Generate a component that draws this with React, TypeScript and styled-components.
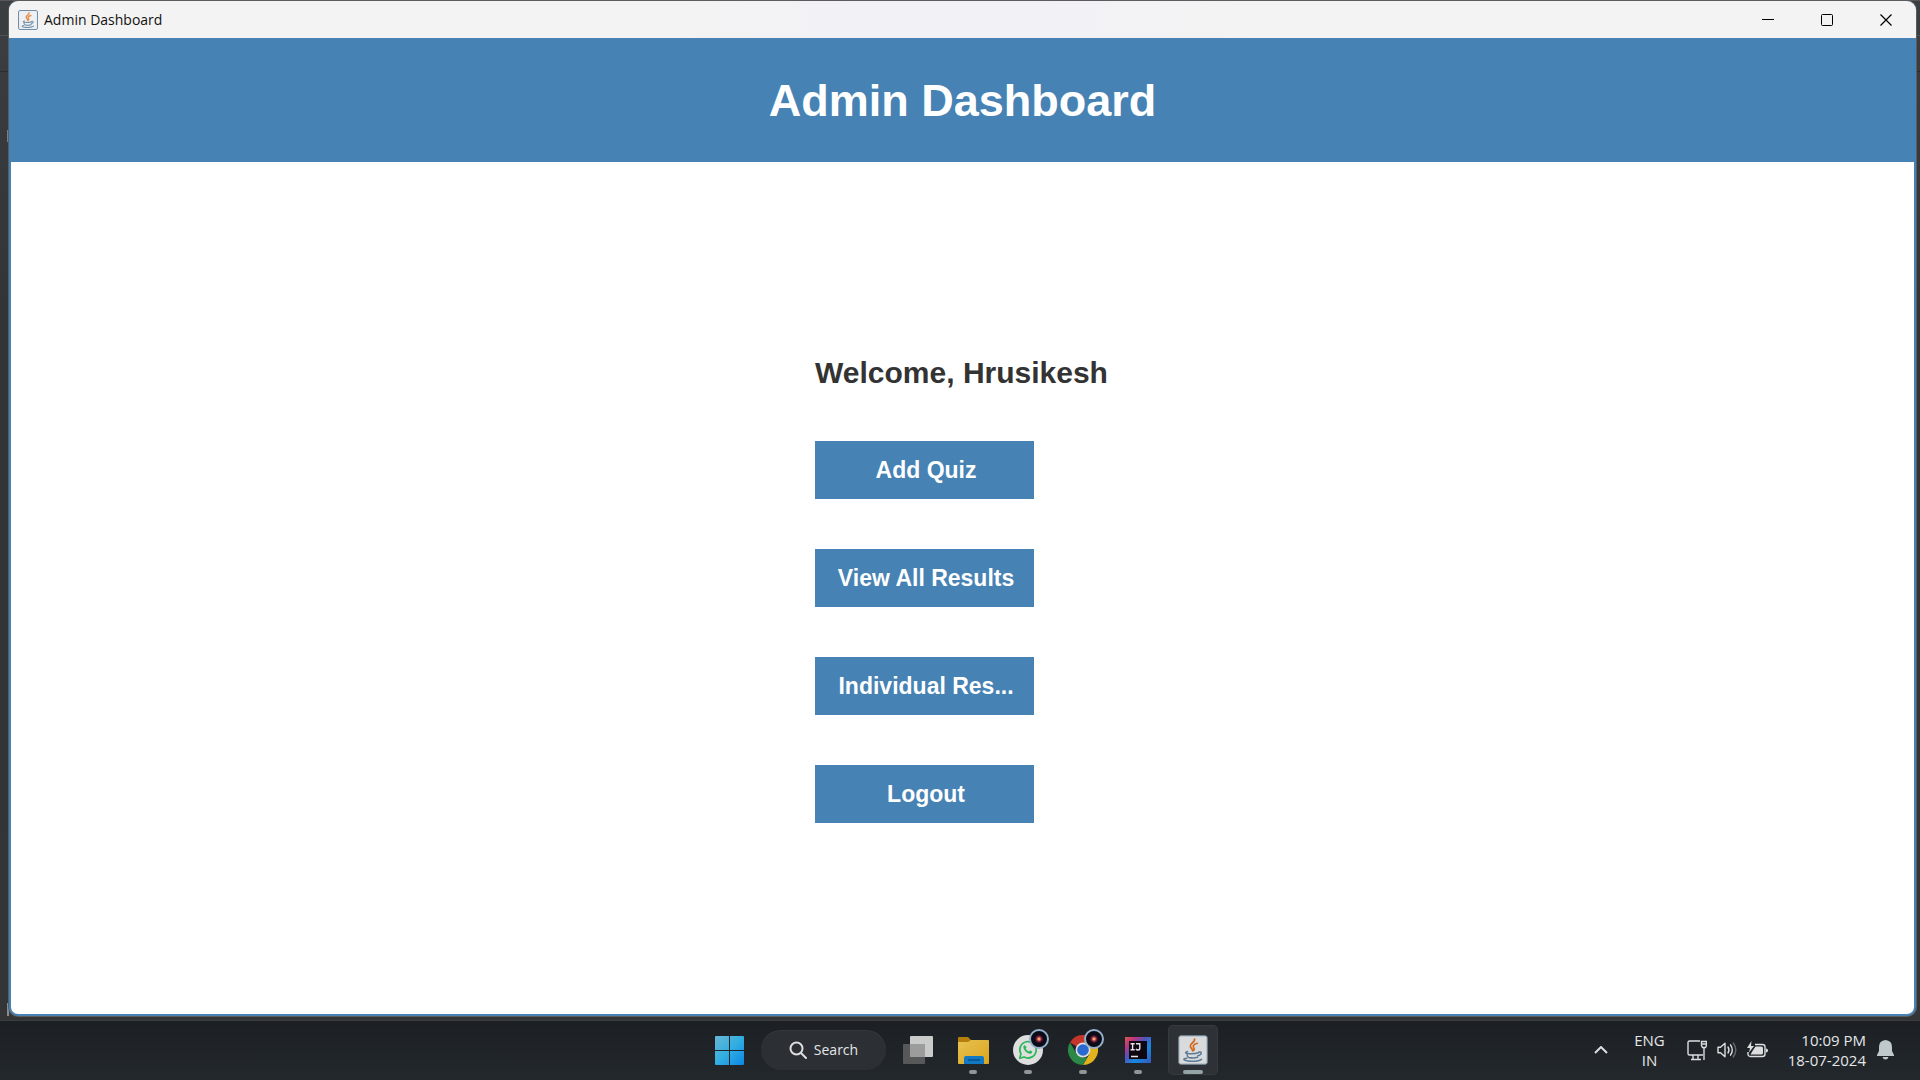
import React from "react";
import styled, { createGlobalStyle } from "styled-components";

const uiFont = `"Open Sans", "Noto Sans", sans-serif`;
const swingFont = `"Liberation Sans", Arial, sans-serif`;
const steel = "#4682b4";

const GlobalStyle = createGlobalStyle`
  *, *::before, *::after { box-sizing: border-box; }
  body { margin: 0; }
  button { border: 0; padding: 0; background: none; color: inherit; font: inherit; }
`;

const Desktop = styled.div`
  display: flex;
  flex-direction: column;
  min-height: 100vh;
  font-family: ${uiFont};
  background:
    linear-gradient(#4f5254, #4f5254) 0 35px / 100% 1px no-repeat,
    linear-gradient(#2a2c2d, #2a2c2d) 0 71px / 100% 1px no-repeat,
    linear-gradient(#7b7e80, #7b7e80) 7px 130px / 2px 12px no-repeat,
    linear-gradient(#8a8c8d, #8a8c8d) 7px 1003px / 2px 13px no-repeat,
    linear-gradient(#5a5557, #5a5557) 0 0 / 100% 1px no-repeat,
    linear-gradient(#3b3f41, #323436 30%, #343536);
`;

const WindowArea = styled.main`
  display: flex;
  flex: 1;
  padding: 1px 4px 4px 9px;
`;

const AppWindow = styled.section`
  display: flex;
  flex: 1;
  flex-direction: column;
  overflow: hidden;
  border-radius: 9px;
  background: ${steel};
  box-shadow: 0 0 0 1px #5a5c5e;
`;

const TitleBar = styled.header`
  display: flex;
  align-items: center;
  height: 37px;
  padding: 0 1px 0 9px;
  background: linear-gradient(90deg, #f3f3f3 35%, #f2f1f6 45%, #f2f1f6 53%, #f3f3f3 65%);
  color: #111;
`;

const TitleText = styled.span`
  flex: 1;
  padding-left: 6px;
  font-size: 14px;
  line-height: 20px;
`;

const CaptionButton = styled.button`
  display: grid;
  place-items: center;
  width: 59px;
  height: 36px;
`;

const Banner = styled.div`
  display: grid;
  place-items: center;
  height: 124px;
  padding-top: 2px;
  background: ${steel};
`;

const BannerTitle = styled.h1`
  margin: 0;
  color: #fff;
  font: bold 45px/52px ${swingFont};
`;

const Content = styled.div`
  display: grid;
  flex: 1;
  place-items: center;
  margin: 0 2px 2px;
  padding-right: 2px;
  border-radius: 0 0 7px 7px;
  background: #fff;
`;

const Menu = styled.div`
  display: flex;
  flex-direction: column;
  align-items: flex-start;
  gap: 50px;
`;

const Welcome = styled.h2`
  margin: 0;
  padding-top: 2px;
  color: #333;
  font: bold 30px/36px ${swingFont};
`;

const MenuButton = styled.button`
  width: 219px;
  height: 58px;
  padding-left: 3px;
  background: ${steel};
  color: #fff;
  font: bold 23px/26px ${swingFont};
  white-space: nowrap;
`;

const Taskbar = styled.footer`
  display: grid;
  grid-template-columns: 1fr auto 1fr;
  align-items: center;
  height: 60px;
  padding-bottom: 1px;
  border-top: 1px solid #3c3d3e;
  background: linear-gradient(#1c2025, #23282d);
  color: #e4e6e7;
`;

const Pinned = styled.nav`
  display: flex;
  grid-column: 2;
  align-items: center;
  gap: 7px;
  padding-left: 2px;
`;

const AppRow = styled.div`
  display: flex;
  gap: 5px;
`;

const TaskButton = styled.button<{ $active?: boolean }>`
  position: relative;
  display: grid;
  place-items: center;
  width: 50px;
  height: 50px;
  border-radius: 5px;
  background: ${(p) => (p.$active ? "#2e3237" : "transparent")};
  box-shadow: ${(p) => (p.$active ? "inset 0 0 0 1px #353a3f" : "none")};
`;

const Running = styled.span<{ $active?: boolean }>`
  position: absolute;
  bottom: 1px;
  left: 50%;
  width: ${(p) => (p.$active ? 20 : 8)}px;
  height: 4px;
  border-radius: 2px;
  background: ${(p) => (p.$active ? "#93a3a6" : "#929597")};
  transform: translateX(-50%);
`;

const ProfileBadge = styled.span`
  position: absolute;
  top: 4px;
  right: 4px;
  width: 20px;
  height: 20px;
  border: 2px solid #94b0ca;
  border-radius: 50%;
  background: radial-gradient(circle, #ffa06a 0 1px, #a33148 2px, #120b1d 4px, #0a0a14 7px);
`;

const SearchButton = styled.button`
  display: flex;
  align-items: center;
  justify-content: center;
  gap: 7px;
  width: 125px;
  height: 40px;
  border-radius: 20px;
  background: #2c3035;
  box-shadow: inset 0 1px 0 #34383d;
  font-size: 14px;
  line-height: 20px;
`;

const Tray = styled.div`
  display: flex;
  align-items: center;
  justify-content: flex-end;
  padding-right: 26px;
  font-size: 15px;
  line-height: 20px;
`;

const TrayButton = styled.button<{ $gap: number }>`
  display: grid;
  place-items: center;
  margin-right: ${(p) => p.$gap}px;
`;

const Language = styled(TrayButton)`
  text-align: center;
`;

const Clock = styled(TrayButton)`
  justify-items: end;
`;

function JavaIcon({ size, small }: { size: number; small?: boolean }) {
  return (
    <svg width={size} height={size} viewBox="0 0 30 30" fill="none" aria-hidden="true">
      <rect x=".8" y=".8" width="28.4" height="28.4" rx="2" fill={small ? "#eef1f4" : "#d9dadb"} stroke={small ? "#6d8ba3" : "#7890a3"} strokeWidth={small ? 1.5 : 1} />
      <g strokeLinecap="round">
        <path d="M16.500 4c1 3-4.500 4.200-4.200 7.200.2 1.800 2.200 2.600 2.400 4.600M19.300 8.300c-3.600 1.200-5 2.700-3.500 4.600.8 1.100.3 2-.6 2.700" stroke={small ? "#e8904a" : "#d2691e"} strokeWidth={small ? 2.2 : 1.7} />
        <path d="M9.500 16.500c-2 .7-2.500 1.300-1 1.700 3.600.8 8.600.7 12-.4M9 19.500c.2 1.600.8 2.400 1.600 2.900 3.200.7 6 .7 9-.2M20.500 17.300c3.200-1.500 4.200 2-.8 3.600M8.800 23.200c-4.800.8-3.300 2.300 1.200 2.700 5.500.6 11.300 0 13.500-1.600" stroke="#5b7a95" strokeWidth="1.500" />
      </g>
    </svg>
  );
}

function StartIcon() {
  return (
    <svg width="29" height="29" viewBox="0 0 29 29" aria-hidden="true">
      <defs>
        <linearGradient id="win" gradientUnits="userSpaceOnUse" x1="0" y1="0" x2="29" y2="29">
          <stop stopColor="#69b7d3" />
          <stop offset=".5" stopColor="#31aee2" />
          <stop offset="1" stopColor="#0b86e6" />
        </linearGradient>
      </defs>
      <path fill="url(#win)" d="M1 0h13v14H0V1a1 1 0 0 1 1-1zM15 0h13a1 1 0 0 1 1 1v13H15zM0 15h14v14H1a1 1 0 0 1-1-1zM15 15h14v13a1 1 0 0 1-1 1H15z" />
    </svg>
  );
}

function SearchIcon() {
  return (
    <svg width="18" height="18" viewBox="0 0 18 18" fill="none" stroke="#dcdedf" strokeWidth="2" aria-hidden="true">
      <circle cx="7.500" cy="7.500" r="6" />
      <path d="M12 12l5 5" strokeLinecap="round" />
    </svg>
  );
}

function TaskViewIcon() {
  return (
    <svg width="30" height="28" viewBox="0 0 30 28" aria-hidden="true">
      <rect y="8" width="22" height="20" rx="1" fill="#575859" />
      <rect x="7" width="23" height="21" rx="1" fill="#c9caca" />
      <rect x="7" y="8" width="15" height="13" fill="#9c9c9c" />
    </svg>
  );
}

function FolderIcon() {
  return (
    <svg width="31" height="28" viewBox="0 0 31 28" aria-hidden="true">
      <defs>
        <linearGradient id="folder" x1="0" y1="0" x2="1" y2="1">
          <stop stopColor="#e8c253" />
          <stop offset="1" stopColor="#dba51c" />
        </linearGradient>
      </defs>
      <path d="M0 2a1 1 0 0 1 1-1h9l3 3h16a2 2 0 0 1 2 2v5H0z" fill="#b57f0b" />
      <path d="M0 6h10l3-2h17a1 1 0 0 1 1 1v22a1 1 0 0 1-1 1H1a1 1 0 0 1-1-1z" fill="url(#folder)" />
      <path d="M6 28v-6a2 2 0 0 1 2-2h16a2 2 0 0 1 2 2v6z" fill="#1179c4" />
      <path d="M10 24h12" stroke="#07518b" strokeWidth="1.500" />
    </svg>
  );
}

function WhatsAppIcon() {
  return (
    <svg width="30" height="30" viewBox="0 0 30 30" aria-hidden="true">
      <circle cx="15" cy="15" r="15" fill="#dedede" />
      <path d="M6.700 23.300l1.200-4.400a8.200 8.200 0 1 1 3.200 3.100z" fill="none" stroke="#29b757" strokeWidth="1.700" strokeLinejoin="round" />
      <path d="M12.100 10.500c-.5-.5-1.300 0-1.600.8-.7 1.800.9 4 2.400 5.400 1.600 1.400 3.900 2.500 5.400 1.700.9-.5 1.300-1.400.8-1.800l-1.800-1c-.6-.2-1 1-1.500.9-1.300-.5-2.400-1.500-3-2.700-.2-.6.9-.9.7-1.500z" fill="#29b757" />
    </svg>
  );
}

function ChromeIcon() {
  return (
    <svg width="30" height="30" viewBox="0 0 30 30" aria-hidden="true">
      <path d="M15 15L2 7.500A15 15 0 0 1 28 7.500H15z" fill="#c5352b" />
      <path d="M15 7.500h13A15 15 0 0 1 15 30l6.500-11.300z" fill="#e2b21d" />
      <path d="M2 7.500l6.500 11.200 6.500 3.800h4.300L15 30A15 15 0 0 1 2 7.500z" fill="#2b8846" />
      <circle cx="15" cy="15" r="7.500" fill="#dedede" />
      <circle cx="15" cy="15" r="5.800" fill="#2a69cf" />
    </svg>
  );
}

function IntelliJIcon() {
  return (
    <svg width="26" height="26" viewBox="0 0 26 26" aria-hidden="true">
      <defs>
        <linearGradient id="ij" x1="0" y1="0" x2="1" y2="1">
          <stop stopColor="#d95b4b" />
          <stop offset=".2" stopColor="#c2347c" />
          <stop offset=".42" stopColor="#5154bd" />
          <stop offset=".65" stopColor="#1689df" />
          <stop offset="1" stopColor="#3857bd" />
        </linearGradient>
      </defs>
      <path d="M0 0h26v26H0z" fill="url(#ij)" />
      <path d="M4 4h18v18H4z" fill="#0e0712" />
      <path d="M5.500 6.800h4.200M7.600 6.800v6M5.500 12.800h4.200M11 6.800h3.800v4.400q0 1.800-1.800 1.800-1.300 0-2-1M6 19.500h7" fill="none" stroke="#e5e1e7" strokeWidth="1.400" />
    </svg>
  );
}

function NetworkIcon() {
  return (
    <svg width="20" height="21" viewBox="0 0 20 21" fill="none" stroke="#dcdedf" strokeWidth="1.400" aria-hidden="true">
      <path d="M13 1H2.500Q1 1 1 2.500v11Q1 15 2.500 15H16M6 15v4M11 15v4M4 19.500h10M17 8v12" />
      <path d="M14.500 1.500h5v4l-1 2h-3l-1-2zM14.500 4h5" />
    </svg>
  );
}

function VolumeIcon() {
  return (
    <svg width="20" height="18" viewBox="0 0 20 18" fill="none" stroke="#dcdedf" strokeWidth="1.400" strokeLinecap="round" strokeLinejoin="round" aria-hidden="true">
      <path d="M1 6.300h2.500L8 2.200v13.600l-4.500-4.100H1z" />
      <path d="M11 6q2 3 0 6M13.500 3.800q3.600 5.200 0 10.400" />
      <path d="M16.300 2q5 7 0 14" stroke="#64686b" />
    </svg>
  );
}

function BatteryIcon() {
  return (
    <svg width="21" height="18" viewBox="0 0 21 18" aria-hidden="true">
      <path d="M8 3.500h7.500Q18 3.500 18 6v7q0 2.500-2.500 2.500h-12Q1 15.500 1 13v-2" fill="none" stroke="#dcdedf" strokeWidth="1.400" />
      <path d="M8.500 5.500h6Q16 5.500 16 7v5q0 1.500-1.500 1.500h-11l2-3.500zM19 7.500q2 0 2 2t-2 2z" fill="#dcdedf" />
      <path d="M4.500 0L0 7h3l-1 4.500L7 5H4z" fill="#dcdedf" />
    </svg>
  );
}

function BellIcon() {
  return (
    <svg width="17" height="20" viewBox="0 0 17 20" fill="#bfc8cb" aria-hidden="true">
      <path d="M8.500 0Q15 .5 15 7v4l2 4v1H0v-1l2-4V7Q2 .5 8.500 0zM5.500 17h6q-.7 2.500-3 2.500t-3-2.500z" />
    </svg>
  );
}

const actions = ["Add Quiz", "View All Results", "Individual Res...", "Logout"];

const apps = [
  { name: "File Explorer", icon: <FolderIcon /> },
  { name: "WhatsApp", icon: <WhatsAppIcon />, badge: true },
  { name: "Google Chrome", icon: <ChromeIcon />, badge: true },
  { name: "IntelliJ IDEA", icon: <IntelliJIcon /> },
  { name: "Java application", icon: <JavaIcon size={30} />, active: true },
];

export default function App() {
  return (
    <Desktop>
      <GlobalStyle />
      <WindowArea>
        <AppWindow>
          <TitleBar>
            <JavaIcon size={20} small />
            <TitleText>Admin Dashboard</TitleText>
            <CaptionButton aria-label="Minimize">
              <svg width="12" height="12" stroke="#000"><path d="M0 5.500h12" /></svg>
            </CaptionButton>
            <CaptionButton aria-label="Maximize">
              <svg width="12" height="12" fill="none" stroke="#000"><rect x=".5" y=".5" width="11" height="11" rx="1" /></svg>
            </CaptionButton>
            <CaptionButton aria-label="Close">
              <svg width="12" height="12" stroke="#000" strokeWidth="1.200"><path d="M.5.5l11 11M11.500.5l-11 11" /></svg>
            </CaptionButton>
          </TitleBar>
          <Banner>
            <BannerTitle>Admin Dashboard</BannerTitle>
          </Banner>
          <Content>
            <Menu>
              <Welcome>Welcome, Hrusikesh</Welcome>
              {actions.map((label) => (
                <MenuButton key={label}>{label}</MenuButton>
              ))}
            </Menu>
          </Content>
        </AppWindow>
      </WindowArea>
      <Taskbar>
        <Pinned aria-label="Taskbar">
          <TaskButton aria-label="Start"><StartIcon /></TaskButton>
          <SearchButton><SearchIcon />Search</SearchButton>
          <AppRow>
            <TaskButton aria-label="Task view"><TaskViewIcon /></TaskButton>
            {apps.map((app) => (
              <TaskButton key={app.name} aria-label={app.name} $active={app.active}>
                {app.icon}
                {app.badge && <ProfileBadge />}
                <Running $active={app.active} />
              </TaskButton>
            ))}
          </AppRow>
        </Pinned>
        <Tray>
          <TrayButton $gap={26} aria-label="Show hidden icons">
            <svg width="14" height="8" fill="none" stroke="#dcdedf" strokeWidth="2"><path d="M1 7l6-6 6 6" /></svg>
          </TrayButton>
          <Language $gap={22}><span>ENG</span><span>IN</span></Language>
          <TrayButton $gap={10} aria-label="Network"><NetworkIcon /></TrayButton>
          <TrayButton $gap={10} aria-label="Volume"><VolumeIcon /></TrayButton>
          <TrayButton $gap={20} aria-label="Battery"><BatteryIcon /></TrayButton>
          <Clock $gap={11}><span>10:09 PM</span><span>18-07-2024</span></Clock>
          <TrayButton $gap={0} aria-label="Notifications"><BellIcon /></TrayButton>
        </Tray>
      </Taskbar>
    </Desktop>
  );
}
